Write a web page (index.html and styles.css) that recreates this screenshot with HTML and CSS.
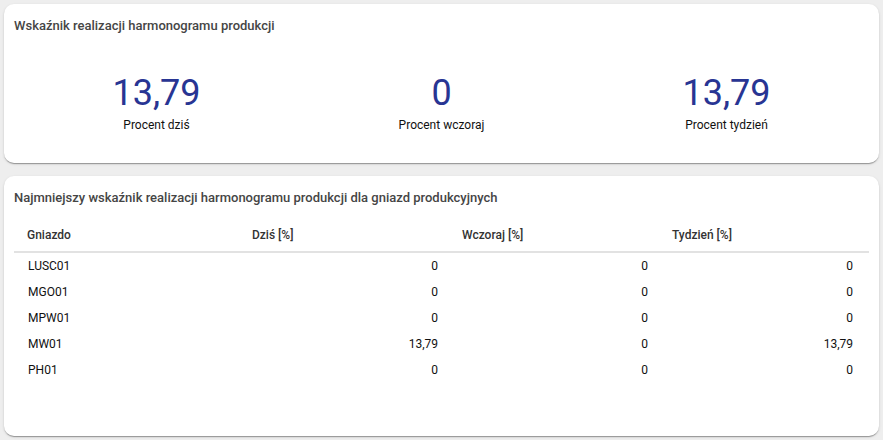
FILE: index.html
```html
<!DOCTYPE html>
<html lang="pl">
<head>
    <meta charset="UTF-8">
    <meta name="viewport" content="width=device-width, initial-scale=1.0">
    <title>Wskaźnik realizacji harmonogramu produkcji</title>
    <link rel="stylesheet" href="styles.css">
</head>
<body>
    <div class="card card-summary">
        <h2 class="card-title">Wskaźnik realizacji harmonogramu produkcji</h2>
        <div class="stats">
            <div class="stat">
                <div class="stat-value">13,79</div>
                <div class="stat-label">Procent dziś</div>
            </div>
            <div class="stat">
                <div class="stat-value">0</div>
                <div class="stat-label">Procent wczoraj</div>
            </div>
            <div class="stat">
                <div class="stat-value">13,79</div>
                <div class="stat-label">Procent tydzień</div>
            </div>
        </div>
    </div>

    <div class="card card-table">
        <h2 class="card-title">Najmniejszy wskaźnik realizacji harmonogramu produkcji dla gniazd produkcyjnych</h2>
        <table class="nests">
            <colgroup>
                <col class="col-name">
                <col class="col-value">
                <col class="col-value">
                <col>
            </colgroup>
            <thead>
                <tr>
                    <th>Gniazdo</th>
                    <th>Dziś [%]</th>
                    <th>Wczoraj [%]</th>
                    <th>Tydzień [%]</th>
                </tr>
            </thead>
            <tbody>
                <tr><td>LUSC01</td><td class="num">0</td><td class="num">0</td><td class="num">0</td></tr>
                <tr><td>MGO01</td><td class="num">0</td><td class="num">0</td><td class="num">0</td></tr>
                <tr><td>MPW01</td><td class="num">0</td><td class="num">0</td><td class="num">0</td></tr>
                <tr><td>MW01</td><td class="num">13,79</td><td class="num">0</td><td class="num">13,79</td></tr>
                <tr><td>PH01</td><td class="num">0</td><td class="num">0</td><td class="num">0</td></tr>
            </tbody>
        </table>
    </div>
</body>
</html>
```

FILE: styles.css
```css
body {
    margin: 0;
    padding: 4px;
    background: #eeeeee;
    font-family: Roboto, "Liberation Sans", Arial, sans-serif;
    color: #212121;
}
.card {
    background: white;
    border-radius: 10px;
    padding: 14px 10px;
    box-sizing: border-box;
    box-shadow: 0 2px 1px -1px rgba(0,0,0,0.2), 0 1px 1px 0 rgba(0,0,0,0.14), 0 1px 3px 0 rgba(0,0,0,0.12);
}
.card-summary {
    height: 159px;
    margin-bottom: 13px;
}
.card-table {
    height: 260px;
}
.card-title {
    margin: 0;
    font-size: 13px;
    line-height: 16px;
    font-weight: 500;
    color: #454545;
}
.stats {
    display: grid;
    grid-template-columns: 1fr 1fr 1fr;
    margin-top: 35px;
    text-align: center;
}
.stat-value {
    font-size: 36px;
    line-height: 48px;
    color: #283593;
}
.stat-label {
    font-size: 12px;
    line-height: 16px;
    color: #111;
}
.nests {
    width: 100%;
    margin-top: 12px;
    border-collapse: collapse;
    table-layout: fixed;
    font-size: 12px;
}
.nests .col-name {
    width: 226px;
}
.nests .col-value {
    width: 210px;
}
.nests th {
    height: 34px;
    padding: 0 12px;
    text-align: left;
    font-weight: 500;
    color: #333;
    border-bottom: 2px solid #e2e2e2;
    box-sizing: border-box;
}
.nests th:first-child {
    padding-left: 13px;
}
.nests td {
    height: 26px;
    padding: 0 12px;
    color: #111;
}
.nests td:first-child {
    padding-left: 14px;
}
.nests td.num {
    text-align: right;
}
.nests td:last-child {
    padding-right: 16px;
}
```
